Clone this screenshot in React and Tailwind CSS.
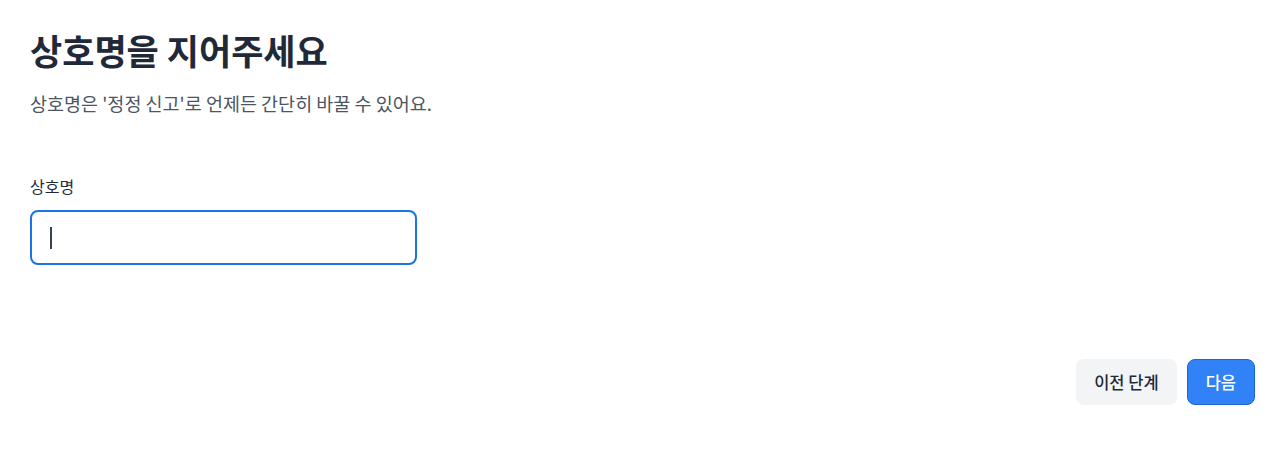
export default function App() {
  const font = { fontFamily: '"Noto Sans CJK KR", "Noto Sans", sans-serif' };
  return (
    <div className="min-h-screen bg-white pl-[30px] pr-[25px] pt-[30px]" style={font}>
      <h1 className="text-[35px] leading-[40px] font-bold text-[#1f2937]">
        상호명을 지어주세요
      </h1>
      <p className="mt-[20px] text-[18.5px] leading-[26px] text-[#4b5563]">
        상호명은 '정정 신고'로 언제든 간단히 바꿀 수 있어요.
      </p>

      <div className="mt-[58px]">
        <label className="block text-[16px] leading-[24px] text-[#1f2937]">상호명</label>
        <div className="mt-[12px] w-[387px] h-[55px] border-2 border-[#1a73e8] rounded-[8px] flex items-center px-[18px]">
          <span className="block w-[1.5px] h-[22px] bg-[#374151]"></span>
        </div>
      </div>

      <div className="mt-[94px] flex justify-end gap-[10px]">
        <button className="h-[46px] px-[18px] rounded-[8px] bg-[#f2f4f6] text-[#1f2937] text-[16.5px] font-medium">
          이전 단계
        </button>
        <button className="h-[46px] px-[18px] rounded-[8px] bg-[#3182f6] border border-[#1b64da] text-white text-[16.5px] font-medium">
          다음
        </button>
      </div>
    </div>
  );
}
